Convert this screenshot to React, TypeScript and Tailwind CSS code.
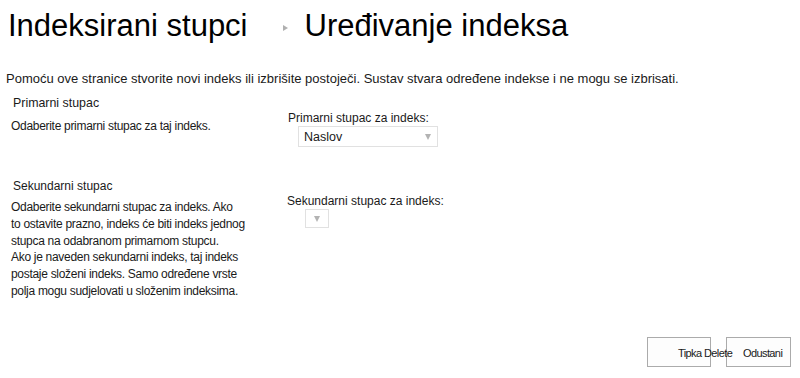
export default function App() {
  return (
    <div className="w-[800px] h-[378px] bg-white text-[#1a1a1a] font-['Liberation_Sans',Arial,sans-serif] overflow-hidden">
      <div className="flex items-center pt-[8px] pl-[8px] h-[44px] text-[31px] leading-[36px] text-black">
        <span>Indeksirani stupci</span>
        <span className="ml-[35px] mr-[17px] w-0 h-0 border-y-[3px] border-y-transparent border-l-[5px] border-l-[#b0b0b0] mt-[4px]" />
        <span>Uređivanje indeksa</span>
      </div>

      <p className="mt-[27px] pl-[6px] text-[13px] leading-[16px] whitespace-nowrap">
        Pomoću ove stranice stvorite novi indeks ili izbrišite postoječi. Sustav stvara određene indekse i ne mogu se izbrisati.
      </p>

      <div className="flex mt-[8px] text-[12px]">
        <div className="w-[288px] shrink-0">
          <h3 className="pl-[13px] leading-[16px] font-normal text-[12.4px]">Primarni stupac</h3>
          <p className="pl-[11px] mt-[7px] leading-[16px] tracking-[-0.3px]">Odaberite primarni stupac za taj indeks.</p>
        </div>
        <div className="pt-[14px]">
          <label className="block leading-[16px] pt-[1px]">Primarni stupac za indeks:</label>
          <div className="ml-[10px] w-[140px] h-[21px] border border-[#e1e1e1] flex items-center justify-between pl-[5px] pr-[6px]">
            <span className="leading-[16px] pt-[1px] text-[12.5px]">Naslov</span>
            <span className="w-0 h-0 border-x-[3.5px] border-x-transparent border-t-[6px] border-t-[#b3b3b3]" />
          </div>
        </div>
      </div>

      <div className="flex mt-[31px] text-[12px]">
        <div className="w-[287px] shrink-0">
          <h3 className="pl-[13px] leading-[16px] font-normal">Sekundarni stupac</h3>
          <p className="pl-[11px] mt-[5px] leading-[16.8px] tracking-[-0.3px] whitespace-nowrap">
            Odaberite sekundarni stupac za indeks. Ako
            <br />
            to ostavite prazno, indeks će biti indeks jednog
            <br />
            stupca na odabranom primarnom stupcu.
            <br />
            Ako je naveden sekundarni indeks, taj indeks
            <br />
            postaje složeni indeks. Samo određene vrste
            <br />
            polja mogu sudjelovati u složenim indeksima.
          </p>
        </div>
        <div className="pt-[14px]">
          <label className="block leading-[16px] pt-[1px]">Sekundarni stupac za indeks:</label>
          <div className="ml-[18px] w-[24px] h-[19px] border border-[#e1e1e1] flex items-center justify-center">
            <span className="w-0 h-0 border-x-[3.5px] border-x-transparent border-t-[6px] border-t-[#b3b3b3]" />
          </div>
        </div>
      </div>

      <div className="flex justify-end gap-[15px] pr-[9px] mt-[37px] text-[11px] tracking-[-0.6px]">
        <button className="relative z-10 w-[64px] h-[30px] border border-[#ababab] bg-[#fdfdfd] text-left pl-[30px] pt-[3px] whitespace-nowrap overflow-visible text-[#1a1a1a]">
          Tipka Delete
        </button>
        <button className="w-[65px] h-[30px] border border-[#ababab] bg-[#fdfdfd] text-left pl-[16px] pt-[3px] whitespace-nowrap text-[#1a1a1a]">
          Odustani
        </button>
      </div>
    </div>
  );
}
